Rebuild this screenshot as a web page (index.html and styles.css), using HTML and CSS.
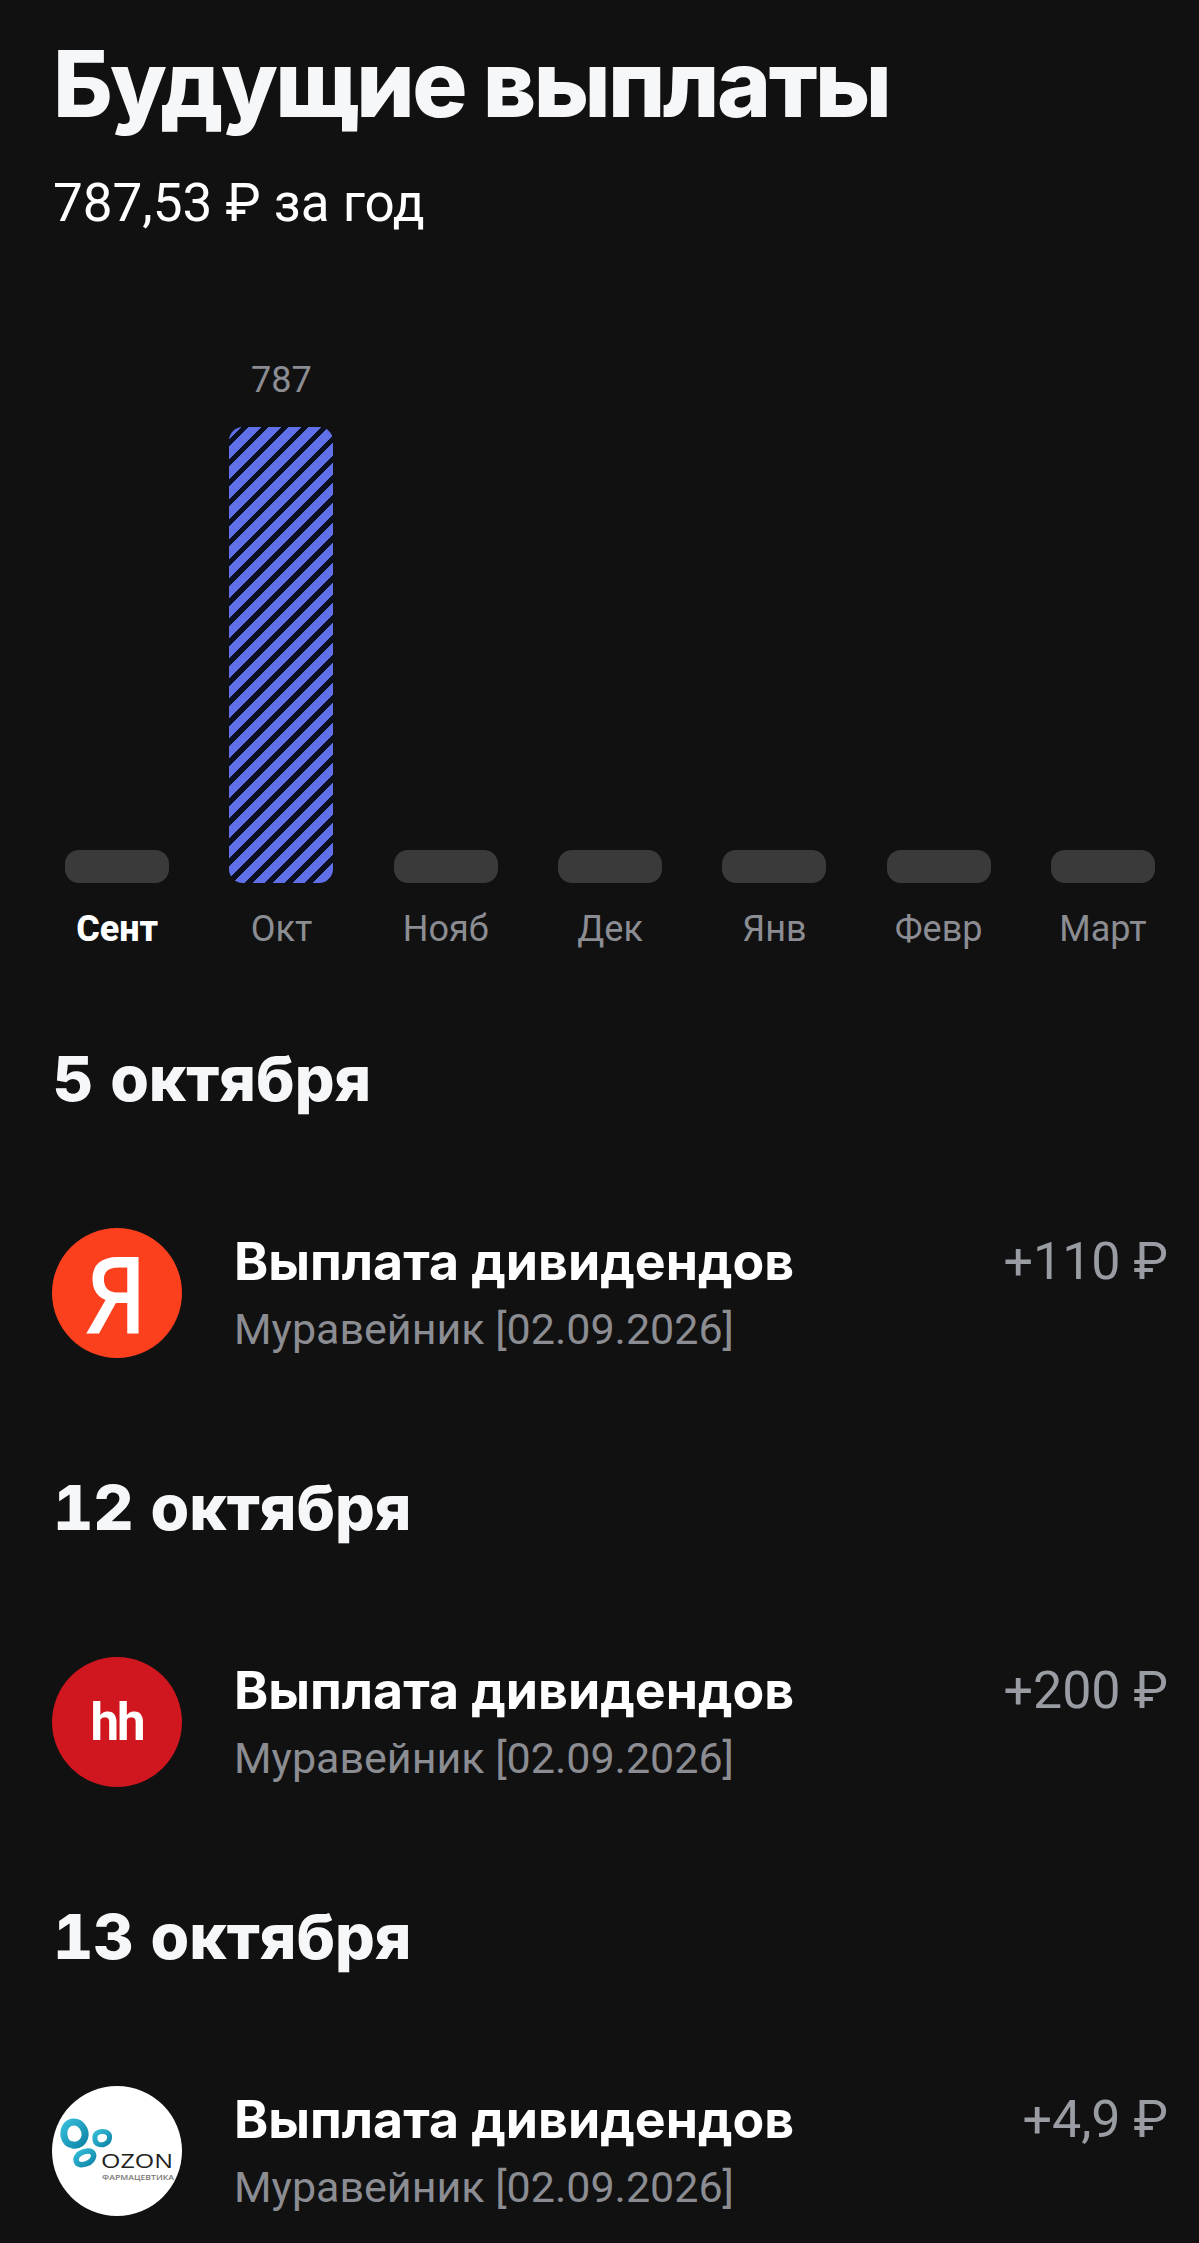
FILE: index.html
```html
<!DOCTYPE html>
<html lang="ru">
<head>
<meta charset="utf-8">
<title>Будущие выплаты</title>
<link rel="stylesheet" href="styles.css">
</head>
<body>
<main class="page">
  <header class="header">
    <h1 class="title">Будущие выплаты</h1>
    <p class="total">787,53 ₽ за год</p>
  </header>
  <section class="chart">
    <div class="col"><div class="bar"></div><div class="month month-active">Сент</div></div>
    <div class="col"><div class="value">787</div><div class="bar bar-filled"></div><div class="month">Окт</div></div>
    <div class="col"><div class="bar"></div><div class="month">Нояб</div></div>
    <div class="col"><div class="bar"></div><div class="month">Дек</div></div>
    <div class="col"><div class="bar"></div><div class="month">Янв</div></div>
    <div class="col"><div class="bar"></div><div class="month">Февр</div></div>
    <div class="col"><div class="bar"></div><div class="month">Март</div></div>
  </section>
  <section class="group">
    <h2 class="date">5 октября</h2>
    <div class="row">
      <div class="logo logo-ya"><span class="ya-glyph">Я</span></div>
      <div class="info"><div class="name">Выплата дивидендов</div><div class="sub">Муравейник [02.09.2026]</div></div>
      <div class="amount">+110 ₽</div>
    </div>
  </section>
  <section class="group">
    <h2 class="date">12 октября</h2>
    <div class="row">
      <div class="logo logo-hh"><span class="hh-glyph">hh</span></div>
      <div class="info"><div class="name">Выплата дивидендов</div><div class="sub">Муравейник [02.09.2026]</div></div>
      <div class="amount">+200 ₽</div>
    </div>
  </section>
  <section class="group">
    <h2 class="date">13 октября</h2>
    <div class="row">
      <div class="logo logo-ozon">
        <svg class="ozon-svg" viewBox="0 0 130 130" width="130" height="130">
          <defs>
            <linearGradient id="ozonBlue" x1="0" y1="0" x2="1" y2="1">
              <stop offset="0" stop-color="#35bcd8"/>
              <stop offset="1" stop-color="#0f86a8"/>
            </linearGradient>
          </defs>
          <g fill="none" stroke="url(#ozonBlue)">
            <path d="M12 50C11 41 16 36 22 36C29 36 34 44 33 50C32 56 27 60 21 59C15 58 13 55 12 50Z" stroke-width="7"/>
            <path d="M43 53C42 48 46 45.5 50 45.5C56 45.5 59 49 57 54C56 58 50 59.5 47 58.5C44 57.5 43 55.5 43 53Z" stroke-width="5"/>
            <path d="M24 73C25 68 31 65 36 65C42 65 43 70 40 74C37 78 31 79 28 78.5C25 78 24 76 24 73Z" stroke-width="5.5"/>
          </g>
          <text class="ozon-word" x="49" y="82" textLength="72" lengthAdjust="spacingAndGlyphs">OZON</text>
          <text class="ozon-small" x="50" y="94" textLength="72" lengthAdjust="spacingAndGlyphs">ФАРМАЦЕВТИКА</text>
        </svg>
      </div>
      <div class="info"><div class="name">Выплата дивидендов</div><div class="sub">Муравейник [02.09.2026]</div></div>
      <div class="amount">+4,9 ₽</div>
    </div>
  </section>
</main>
</body>
</html>
```
FILE: styles.css
```css
html, body {
  margin: 0;
  padding: 0;
  background: #111112;
  height: 2243px;
  overflow: hidden;
}
.page {
  font-family: Roboto, "Liberation Sans", sans-serif;
  color: #fff;
}
.header {
  padding: 29px 0 0 53px;
}
.title {
  margin: 0;
  font-family: Inter, sans-serif;
  font-weight: 800;
  font-size: 92px;
  line-height: 110px;
  letter-spacing: -2.5px;
  color: #f6f7f8;
}
.total {
  margin: 34px 0 0;
  font-size: 53px;
  line-height: 60px;
  color: #fff;
}
.chart {
  display: grid;
  grid-template-columns: repeat(7, 164.3px);
  align-items: end;
  padding-left: 35px;
  height: 740px;
  margin-top: -22px;
}
.col {
  display: flex;
  flex-direction: column;
  align-items: center;
}
.value {
  font-size: 36px;
  line-height: 44px;
  color: #8b8d92;
  margin-bottom: 25px;
}
.bar {
  width: 104px;
  height: 33px;
  border-radius: 14px;
  background: #3a3a3b;
}
.bar-filled {
  height: 456px;
  background: repeating-linear-gradient(135deg, #5f70e8 0, #5f70e8 8.5px, #0a1020 8.5px, #0a1020 14.14px);
}
.month {
  margin-top: 24px;
  font-size: 36px;
  line-height: 44px;
  color: #8b8d92;
}
.month-active {
  color: #fff;
  font-weight: 800;
}
.date {
  margin: 0;
  padding-left: 53px;
  font-family: Inter, sans-serif;
  font-weight: 800;
  font-size: 62.5px;
  line-height: 76px;
  font-variant-numeric: tabular-nums;
  color: #f6f7f8;
}
.chart + .group { margin-top: 89px; }
.group + .group { margin-top: 111px; }
.row {
  display: flex;
  align-items: flex-start;
  margin-top: 112px;
  padding: 0 31px 0 52px;
}
.logo {
  flex: none;
  width: 130px;
  height: 130px;
  border-radius: 50%;
  display: flex;
  align-items: center;
  justify-content: center;
}
.logo-ya { background: #fc3f1d; }
.logo-hh { background: #d0161e; }
.logo-ozon { background: #fff; overflow: hidden; }
.ya-glyph {
  display: inline-block;
  font-family: "Open Sans", sans-serif;
  font-weight: 600;
  font-size: 106px;
  line-height: 1;
  color: #fff;
  margin-right: 1px;
  transform: scaleX(0.9);
}
.hh-glyph {
  font-family: Roboto, sans-serif;
  font-weight: 700;
  font-size: 51px;
  letter-spacing: -2px;
  color: #fff;
}
.ozon-svg { display: block; }
.ozon-word {
  font-family: "Open Sans", sans-serif;
  font-size: 20px;
  fill: #222;
}
.ozon-small {
  font-family: "Open Sans", sans-serif;
  font-size: 7px;
  font-weight: 600;
  fill: #777;
}
.info {
  flex: 1;
  margin-left: 52px;
  padding-top: 2px;
}
.name {
  font-family: Inter, sans-serif;
  font-weight: 700;
  font-size: 51.8px;
  line-height: 62px;
  color: #fff;
}
.sub {
  margin-top: 11px;
  font-size: 43px;
  line-height: 52px;
  color: #8b8d92;
}
.amount {
  padding-top: 3px;
  font-size: 52px;
  line-height: 62px;
  color: #9a9ca3;
}
```
